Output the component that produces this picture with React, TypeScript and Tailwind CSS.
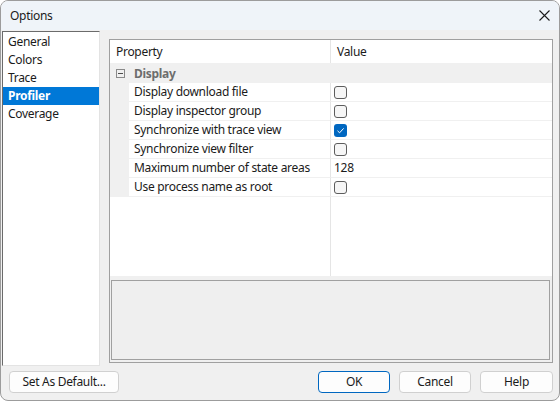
import React from "react";

interface Row {
  name: string;
  value: boolean | string;
}

const rows: Row[] = [
  { name: "Display download file", value: false },
  { name: "Display inspector group", value: false },
  { name: "Synchronize with trace view", value: true },
  { name: "Synchronize view filter", value: false },
  { name: "Maximum number of state areas", value: "128" },
  { name: "Use process name as root", value: false },
];

const pages = ["General", "Colors", "Trace", "Profiler", "Coverage"];

function CheckBox({ checked }: { checked: boolean }) {
  if (checked) {
    return (
      <div className="w-[13px] h-[13px] rounded-[3px] bg-[#0067c0] flex items-center justify-center">
        <svg width="9" height="9" viewBox="0 0 9 9">
          <path d="M1.5 4.8 L3.6 6.8 L7.6 2.4" fill="none" stroke="#ffffff" strokeWidth="1" />
        </svg>
      </div>
    );
  }
  return <div className="w-[13px] h-[13px] rounded-[3px] border border-[#5d5d5d] bg-[#f6f6f6]" />;
}

function Button({ label, primary }: { label: string; primary?: boolean }) {
  return (
    <button
      className={
        "w-full h-[22px] rounded-[4px] bg-[#fdfdfd] text-[12px] text-[#1b1b1b] flex items-center justify-center " +
        (primary ? "border border-[#0067c0]" : "border border-[#d0d0d0]")
      }
    >
      {label}
    </button>
  );
}

export default function App() {
  return (
    <div
      className="w-[560px] h-[401px] bg-[#f0f0f0] text-[#1b1b1b] text-[12px] tracking-[-0.3px] border border-[#9c9c9c] rounded-[8px] overflow-hidden flex flex-col"
      style={{ fontFamily: '"Noto Sans", "Open Sans", sans-serif' }}
    >
      {/* title bar */}
      <div className="h-[29px] shrink-0 bg-[#eff4f9] flex items-center justify-between pl-[9px] pr-[9px]">
        <span className="text-[12px] leading-none">Options</span>
        <svg width="11" height="11" viewBox="0 0 11 11">
          <path d="M0.5 0.5 L10.5 10.5 M10.5 0.5 L0.5 10.5" stroke="#1b1b1b" strokeWidth="1.1" />
        </svg>
      </div>

      <div className="flex flex-1 min-h-0">
        {/* page list */}
        <div className="ml-[1px] mt-[1px] w-[98px] h-[335px] bg-white border-l border-t border-[#6b6b6b] border-r border-r-[#e3e3e3] border-b border-b-[#e3e3e3] pt-[1px]">
          {pages.map((p) => (
            <div
              key={p}
              className={
                "h-[18px] flex items-center pl-[5px] " +
                (p === "Profiler" ? "bg-[#0078d7] text-white font-bold" : "")
              }
            >
              {p}
            </div>
          ))}
        </div>

        {/* property grid */}
        <div className="ml-[9px] mt-[9px] w-[444px] h-[324px] border border-[#a0a0a0] bg-white flex flex-col">
          <div className="flex-1 flex flex-col">
            <div className="h-[24px] flex items-center border-b border-[#f0f0f0]">
              <div className="w-[221px] pl-[6px] border-r border-[#e5e5e5] h-full flex items-center">Property</div>
              <div className="pl-[6px]">Value</div>
            </div>
            <div className="h-[19px] bg-[#f0f0f0] flex items-center">
              <div className="w-[20px] flex justify-center">
                <svg width="9" height="9" viewBox="0 0 9 9">
                  <rect x="0.5" y="0.5" width="8" height="8" fill="#f0f0f0" stroke="#8a8a8a" />
                  <path d="M2 4.5 H7" stroke="#4d4d4d" />
                </svg>
              </div>
              <span className="pl-[4px] font-bold text-[#6d6d6d]">Display</span>
            </div>
            {rows.map((r) => (
              <div key={r.name} className="h-[19px] flex">
                <div className="w-[19px] bg-[#f0f0f0]" />
                <div className="w-[202px] pl-[5px] flex items-center border-b border-[#f0f0f0] border-r border-r-[#e5e5e5]">
                  {r.name}
                </div>
                <div className="flex-1 pl-[3px] flex items-center border-b border-[#f0f0f0]">
                  {typeof r.value === "string" ? r.value : <CheckBox checked={r.value} />}
                </div>
              </div>
            ))}
            <div className="flex-1 flex">
              <div className="w-[221px] border-r border-[#e5e5e5]" />
            </div>
          </div>
          <div className="h-[86px] bg-[#f0f0f0] pt-[4px] pl-[1px] pr-[2px] pb-[2px]">
            <div className="w-full h-full border border-[#a0a0a0] bg-[#efefef]" />
          </div>
        </div>
      </div>

      {/* buttons */}
      <div className="h-[29px] shrink-0 flex items-start pl-[8px] pr-[6px]">
        <div className="w-[110px]">
          <Button label="Set As Default..." />
        </div>
        <div className="flex-1" />
        <div className="flex gap-[9px]">
          <div className="w-[72px]">
            <Button label="OK" primary />
          </div>
          <div className="w-[72px]">
            <Button label="Cancel" />
          </div>
          <div className="w-[73px]">
            <Button label="Help" />
          </div>
        </div>
      </div>
    </div>
  );
}
